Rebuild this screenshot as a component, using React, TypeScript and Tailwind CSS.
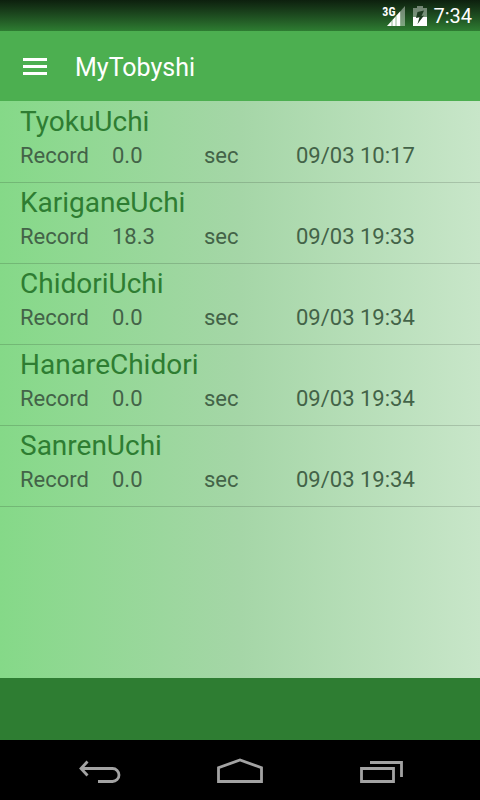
// App.tsx
import React from 'react';

interface TrainingRecord {
  id: number;
  name: string;
  seconds: string;
  date: string;
}

const RECORDS: TrainingRecord[] = [
  { id: 1, name: 'TyokuUchi', seconds: '0.0', date: '09/03 10:17' },
  { id: 2, name: 'KariganeUchi', seconds: '18.3', date: '09/03 19:33' },
  { id: 3, name: 'ChidoriUchi', seconds: '0.0', date: '09/03 19:34' },
  { id: 4, name: 'HanareChidori', seconds: '0.0', date: '09/03 19:34' },
  { id: 5, name: 'SanrenUchi', seconds: '0.0', date: '09/03 19:34' },
];

const SignalIcon = () => (
  <svg className="h-5 w-[18px]" viewBox="0 0 18 20">
    <path d="M14 4.500 18 0v20h-4z" fill="#fff" opacity="0.4" />
    <path d="M0 20 13.500 5v15z" fill="#fff" />
    <path d="M5 14v6M9 10v10" stroke="#2e7d32" strokeWidth="0.9" opacity="0.6" />
  </svg>
);

const BatteryIcon = () => (
  <svg className="h-5 w-3.5" viewBox="0 0 14 20">
    <path d="M4 0h6v2h4v9H0V2h4z" fill="#fff" opacity="0.4" />
    <path d="M0 11h14v9H0z" fill="#fff" />
    <path d="M11 4.500 4.500 6 3 12l3.500-.7L4.500 18l6.500-8.500-2.500.5z" fill="#1d3b1f" />
  </svg>
);

const StatusBar = () => (
  <div className="flex h-[31px] items-center justify-end bg-linear-to-b from-[#0d200e] to-[#2e7d32] pr-2 text-white">
    <div className="flex items-start">
      <span className="-mr-2 font-['Roboto_Condensed','Roboto',sans-serif] text-[12px] leading-[12px] font-bold">3G</span>
      <SignalIcon />
    </div>
    <div className="ml-2">
      <BatteryIcon />
    </div>
    <span className="ml-1.5 pt-px text-[20px] leading-[24px]">7:34</span>
  </div>
);

const AppBar = () => (
  <header className="flex h-[70px] items-center bg-[#4caf50] pr-6 pl-[23px] text-white">
    <button type="button" aria-label="Open menu" className="flex w-6 flex-col gap-1">
      <span className="h-[3px] w-full bg-white" />
      <span className="h-[3px] w-full bg-white" />
      <span className="h-[3px] w-full bg-white" />
    </button>
    <h1 className="ml-7 pt-1 text-[25px] leading-[30px]">MyTobyshi</h1>
  </header>
);

const RecordRow: React.FC<{ record: TrainingRecord }> = ({ record }) => (
  <li className="h-[81px] border-b border-black/15 px-5 pt-1">
    <h2 className="text-[28px] leading-[32px] text-[#2e7d32]">{record.name}</h2>
    <div className="flex pt-1 text-[22px] leading-[28px] text-[#436348]">
      <span className="w-[92px]">Record</span>
      <span className="w-[92px]">{record.seconds}</span>
      <span className="w-[92px]">sec</span>
      <time>{record.date}</time>
    </div>
  </li>
);

const NavBar = () => (
  <nav className="flex h-[60px] items-center justify-center gap-[60px] bg-black text-[#a3a3a3]">
    <button type="button" aria-label="Back" className="w-20">
      <svg className="mx-auto h-8 w-12" viewBox="0 0 48 32" fill="none" stroke="currentColor" strokeWidth="2.8">
        <path d="M5 14.500h31.500a6.500 6.500 0 0 1 0 13H22" />
        <path d="M11.500 7.500 5 14.500l6.500 7" />
      </svg>
    </button>
    <button type="button" aria-label="Home" className="w-20">
      <svg className="mx-auto h-8 w-12" viewBox="0 0 48 32" fill="none" stroke="currentColor" strokeWidth="2.8">
        <path d="M2.500 27.500V13.700L24 6l21.500 7.700V27.500z" />
      </svg>
    </button>
    <button type="button" aria-label="Recent apps" className="w-20">
      <svg className="mx-auto h-8 w-12" viewBox="0 0 48 32" fill="none" stroke="currentColor" strokeWidth="2.8">
        <path d="M5.500 14.500h32v13h-32zM14 8.500h31.500V23" />
      </svg>
    </button>
  </nav>
);

const App: React.FC = () => {
  return (
    <div className="flex min-h-screen flex-col font-['Roboto',sans-serif]">
      <StatusBar />
      <AppBar />
      <main className="flex-1 bg-linear-to-r from-[#85d988] via-[#a5d6a7] to-[#c8e6c9] pt-px">
        <ul>
          {RECORDS.map(record => (
            <RecordRow key={record.id} record={record} />
          ))}
        </ul>
      </main>
      <footer className="h-[62px] bg-[#2e7d32]" />
      <NavBar />
    </div>
  );
};

export default App;
